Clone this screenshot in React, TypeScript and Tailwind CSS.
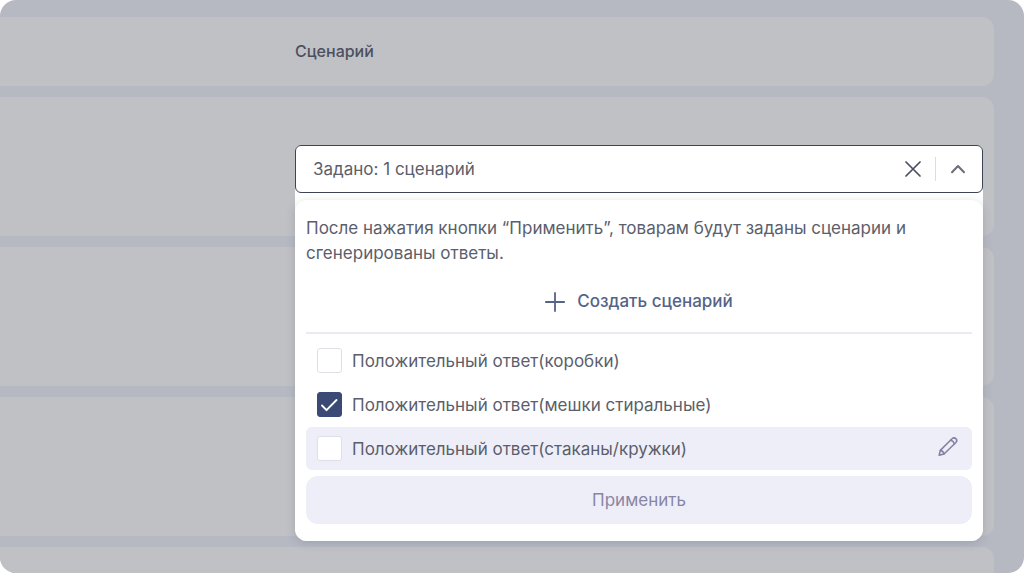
import { useState } from "react";

const initialScenarios = [
  { id: "boxes", label: "Положительный ответ(коробки)", checked: false },
  { id: "bags", label: "Положительный ответ(мешки стиральные)", checked: true },
  { id: "cups", label: "Положительный ответ(стаканы/кружки)", checked: false, active: true },
];

function CloseIcon() {
  return (
    <svg className="h-4 w-4" viewBox="0 0 16 16" fill="none" stroke="currentColor" strokeWidth="1.7" strokeLinecap="round">
      <path d="M1 1l14 14M15 1 1 15" />
    </svg>
  );
}

function ChevronUpIcon() {
  return (
    <svg className="h-4 w-4" viewBox="0 0 16 16" fill="none" stroke="currentColor" strokeWidth="2" strokeLinecap="round" strokeLinejoin="round">
      <path d="M2 11.3 8 5l6 6.3" />
    </svg>
  );
}

function PlusIcon() {
  return (
    <svg className="h-5 w-5" viewBox="0 0 20 20" fill="none" stroke="currentColor" strokeWidth="1.8" strokeLinecap="round">
      <path d="M10 .9v18.2M.9 10h18.2" />
    </svg>
  );
}

function PencilIcon() {
  return (
    <svg className="h-5 w-5" viewBox="0 0 20 20" fill="none" stroke="currentColor" strokeWidth="1.6" strokeLinecap="round" strokeLinejoin="round">
      <path d="M1.2 18.2l1.1-4.8L14 1.800a2.600 2.600 0 0 1 3.900 3.700L6 17z" />
      <path d="M2.500 13.400q2.800.6 3.500 3.600M12.600 3.200q3 .7 3.800 3.700" />
    </svg>
  );
}

function ScenarioOption({
  id,
  label,
  checked,
  active = false,
  onToggle,
}: {
  id: string;
  label: string;
  checked: boolean;
  active?: boolean;
  onToggle: () => void;
}) {
  return (
    <li className={`flex h-[43px] items-center rounded-md pr-[14px] pl-[11px] ${active ? "bg-[#eeeef8]" : ""}`}>
      <span className="relative flex shrink-0">
        <input
          id={id}
          type="checkbox"
          checked={checked}
          onChange={onToggle}
          className="peer h-[25px] w-[25px] appearance-none rounded-[3px] border border-[#dfdfe9] bg-white checked:border-[#3b4a74] checked:bg-[#3b4a74]"
        />
        <svg
          className="pointer-events-none absolute inset-0 hidden h-full w-full text-white peer-checked:block"
          viewBox="0 0 25 25"
          fill="none"
          stroke="currentColor"
          strokeWidth="1.9"
          strokeLinecap="round"
          strokeLinejoin="round"
        >
          <path d="M5 13.500l4.500 4.700L19.500 8" />
        </svg>
      </span>
      <label htmlFor={id} className="flex-1 pt-0.5 pl-[10px]">
        {label}
      </label>
      {active && (
        <button type="button" aria-label="Редактировать" className="pb-1 text-[#8583a3]">
          <PencilIcon />
        </button>
      )}
    </li>
  );
}

function ScenarioSelect() {
  const [scenarios, setScenarios] = useState(initialScenarios);

  const toggle = (id: string) =>
    setScenarios(scenarios.map((s) => (s.id === id ? { ...s, checked: !s.checked } : s)));

  return (
    <div className="relative h-12">
      <div className="absolute inset-x-0 top-0 z-10 rounded-t-md rounded-b-xl bg-white text-[17px] text-[#5b5e6b]">
        <div className="flex h-12 items-center rounded-md border border-[#3f4356] bg-white pr-4 pl-[17px]">
          <span className="flex-1 pt-0.5">Задано: 1 сценарий</span>
          <button type="button" aria-label="Очистить" className="text-[#4b4f60]">
            <CloseIcon />
          </button>
          <span className="mx-[14px] h-6 w-px bg-[#dcdce8]" />
          <button type="button" aria-label="Свернуть" className="text-[#6a6d7a]">
            <ChevronUpIcon />
          </button>
        </div>

        <div className="mt-[7px] rounded-xl bg-white px-[11px] pt-4 pb-[17px] shadow-[0_2px_10px_rgba(60,70,90,0.2)]">
          <p className="leading-[25px]">
            После нажатия кнопки “Применить”, товарам будут заданы сценарии и сгенерированы ответы.
          </p>
          <button
            type="button"
            className="mx-auto mt-4 mb-[10px] flex h-10 items-center gap-3 font-medium text-[#566388]"
          >
            <PlusIcon />
            Создать сценарий
          </button>
          <hr className="border-t-2 border-[#eaeaf2]" />
          <ul className="mt-[5px] flex flex-col gap-px">
            {scenarios.map((s) => (
              <ScenarioOption key={s.id} {...s} onToggle={() => toggle(s.id)} />
            ))}
          </ul>
          <button type="button" className="mt-[6px] h-12 w-full rounded-xl bg-[#eeeef8] pt-0.5 text-[#8886a5]">
            Применить
          </button>
        </div>
      </div>
    </div>
  );
}

function EmptyRow() {
  return <div className="h-[139px] shrink-0 rounded-r-xl bg-[#c0c1c5]" />;
}

export default function App() {
  return (
    <div className="h-screen bg-white font-['Inter',sans-serif]">
      <main className="flex h-full flex-col gap-[11px] overflow-hidden rounded-2xl bg-[#b6b9c2] pt-[17px] pr-[30px]">
        <div className="flex shrink-0 items-center rounded-r-xl bg-[#c0c1c5] pr-[11px] pl-[295px]">
          <h2 className="py-[22px] text-base leading-[25px] font-medium text-[#4c505e]">Сценарий</h2>
        </div>
        <div className="shrink-0 rounded-r-xl bg-[#c0c1c5] pt-12 pr-[11px] pb-[43px] pl-[295px]">
          <ScenarioSelect />
        </div>
        <EmptyRow />
        <EmptyRow />
        <EmptyRow />
      </main>
    </div>
  );
}
